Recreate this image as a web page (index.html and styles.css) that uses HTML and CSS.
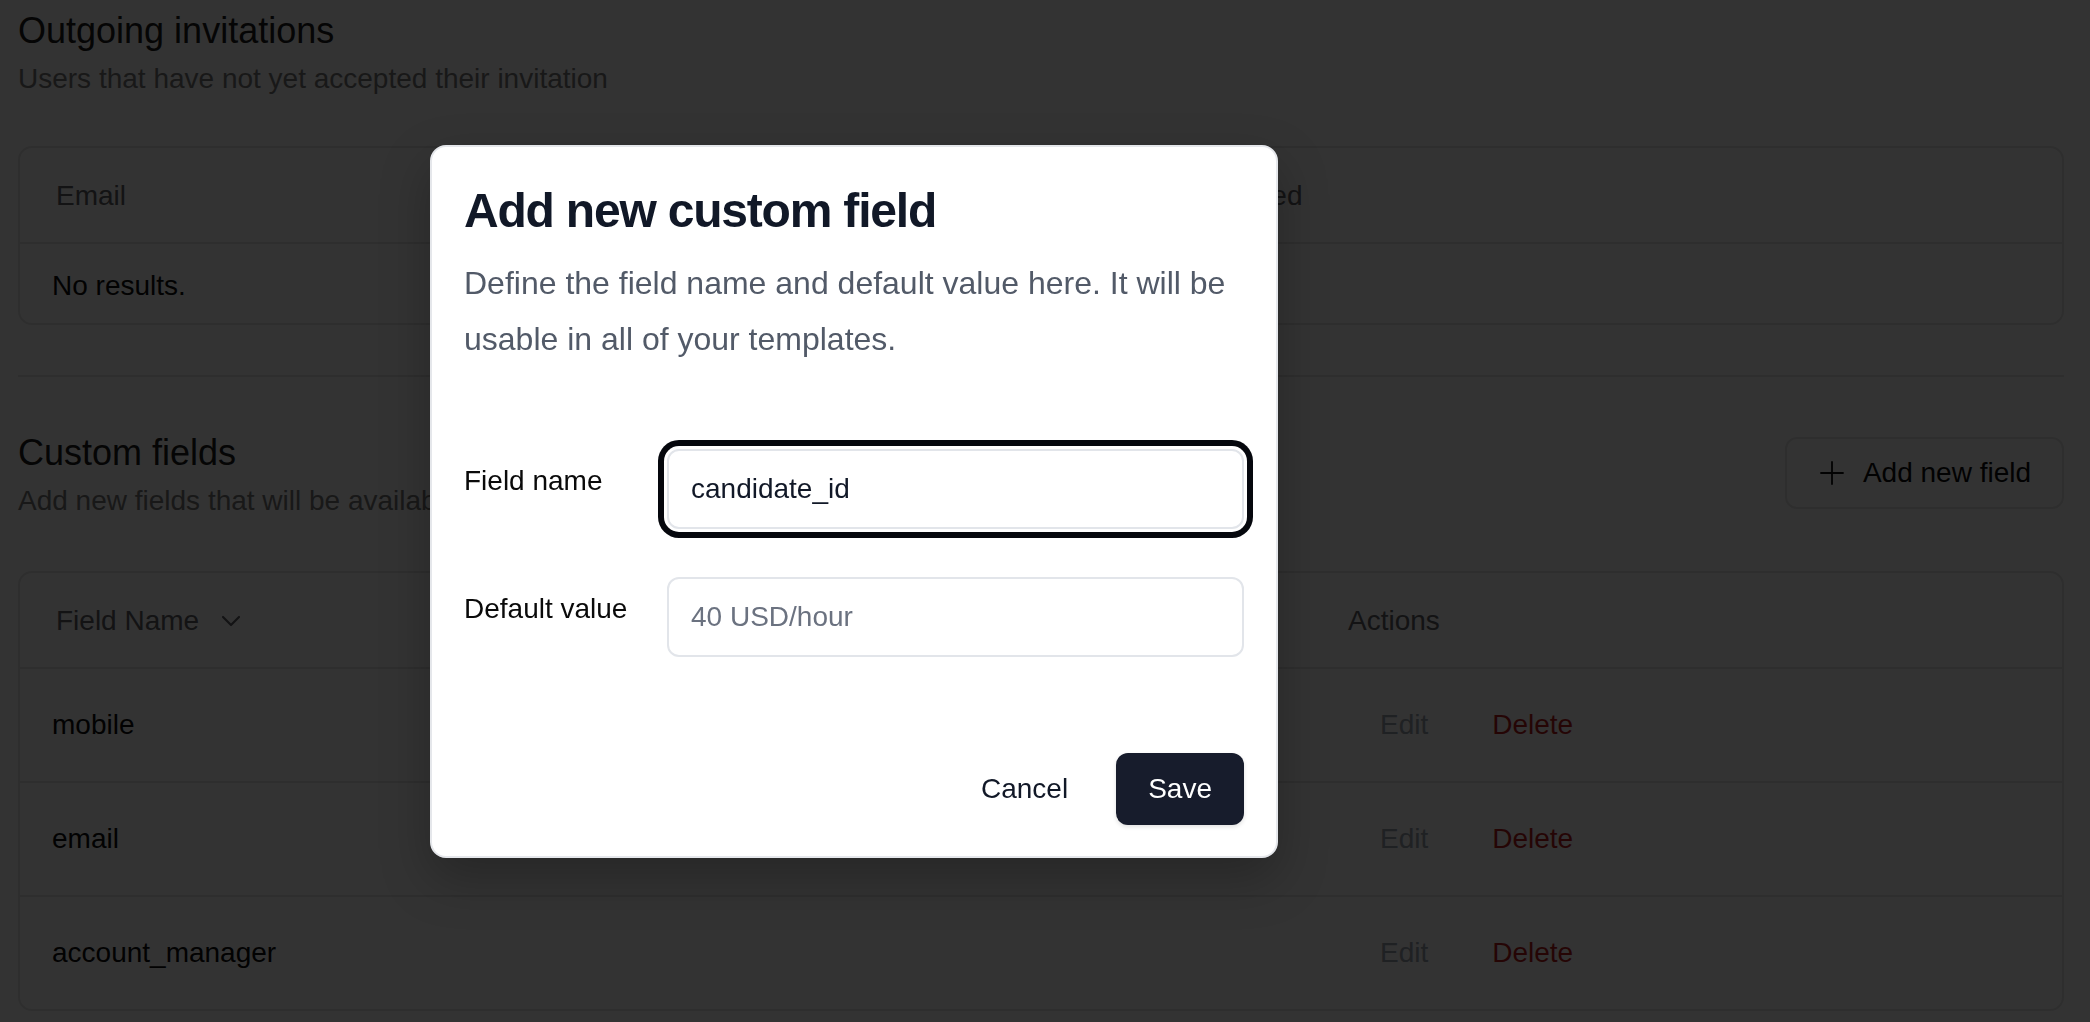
FILE: index.html
```html
<!DOCTYPE html>
<html lang="en">
<head>
    <meta charset="UTF-8">
    <meta name="viewport" content="width=device-width, initial-scale=1.0">
    <title>Settings - Custom fields</title>
    <link rel="stylesheet" href="styles.css">
</head>
<body>

    <main class="settings">
        <!-- 초대 목록 -->
        <section class="section">
            <h2 class="section-title">Outgoing invitations</h2>
            <p class="section-desc">Users that have not yet accepted their invitation</p>

            <table class="data-table">
                <thead>
                    <tr>
                        <th class="col-email">Email</th>
                        <th>Invited</th>
                    </tr>
                </thead>
                <tbody>
                    <tr>
                        <td class="empty-cell" colspan="2">No results.</td>
                    </tr>
                </tbody>
            </table>
        </section>

        <hr class="divider">

        <!-- 커스텀 필드 -->
        <section class="section">
            <div class="section-head">
                <div>
                    <h2 class="section-title">Custom fields</h2>
                    <p class="section-desc">Add new fields that will be available</p>
                </div>
                <button class="btn-outline">
                    <svg class="icon-plus" viewBox="0 0 24 24" fill="none" stroke="currentColor" stroke-width="1.8" stroke-linecap="round">
                        <path d="M12 1v22M1 12h22"/>
                    </svg>
                    Add new field
                </button>
            </div>

            <table class="data-table fields-table">
                <thead>
                    <tr>
                        <th class="col-name">
                            <span class="sort-head">
                                Field Name
                                <svg class="icon-chevron" viewBox="0 0 24 24" fill="none" stroke="currentColor" stroke-width="1.6" stroke-linecap="round" stroke-linejoin="round">
                                    <path d="m6 9 6 6 6-6"/>
                                </svg>
                            </span>
                        </th>
                        <th>Actions</th>
                    </tr>
                </thead>
                <tbody>
                    <tr>
                        <td>mobile</td>
                        <td class="actions-cell">
                            <button class="link-btn edit">Edit</button><button class="link-btn delete">Delete</button>
                        </td>
                    </tr>
                    <tr>
                        <td>email</td>
                        <td class="actions-cell">
                            <button class="link-btn edit">Edit</button><button class="link-btn delete">Delete</button>
                        </td>
                    </tr>
                    <tr>
                        <td>account_manager</td>
                        <td class="actions-cell">
                            <button class="link-btn edit">Edit</button><button class="link-btn delete">Delete</button>
                        </td>
                    </tr>
                </tbody>
            </table>
        </section>
    </main>

    <!-- 모달 -->
    <div class="overlay"></div>

    <div class="dialog" role="dialog">
        <h2 class="dialog-title">Add new custom field</h2>
        <p class="dialog-desc">Define the field name and default value here. It will be usable in all of your templates.</p>

        <div class="dialog-form">
            <div class="form-row">
                <label for="fieldName">Field name</label>
                <input type="text" id="fieldName" class="text-input focused" value="candidate_id">
            </div>
            <div class="form-row">
                <label for="defaultValue">Default value</label>
                <input type="text" id="defaultValue" class="text-input" placeholder="40 USD/hour">
            </div>
        </div>

        <div class="dialog-footer">
            <button class="btn btn-ghost">Cancel</button>
            <button class="btn btn-primary">Save</button>
        </div>
    </div>

</body>
</html>
```

FILE: styles.css
```css
* {
    box-sizing: border-box;
}

body {
    margin: 0;
    font-family: "Liberation Sans", Arial, sans-serif;
    background-color: white;
    color: #0a0a0a;
    overflow: hidden;
}

.settings {
    padding: 3px 26px 0 18px;
}

.section-title {
    margin: 0;
    font-size: 36px;
    line-height: 56px;
    font-weight: normal;
    color: #1a1a1a;
}

.section-desc {
    margin: 0;
    font-size: 28px;
    line-height: 40px;
    color: #7a7a7a;
}

.divider {
    margin: 50px 0 48px;
    border: none;
    border-top: 2px solid #e5e5e5;
}

.section-head {
    display: flex;
    justify-content: space-between;
    align-items: center;
}

/* 테이블 */
.data-table {
    width: 100%;
    margin-top: 47px;
    border: 2px solid #e5e5e5;
    border-radius: 14px;
    border-spacing: 0;
    table-layout: fixed;
    font-size: 28px;
    line-height: 40px;
}

.data-table th {
    padding: 28px 36px 26px;
    text-align: left;
    font-weight: normal;
    color: #5f5f66;
    border-bottom: 2px solid #e5e5e5;
}

.data-table td {
    padding: 36px 32px;
    color: #0a0a0a;
}

.data-table tbody tr:not(:last-child) td {
    border-bottom: 2px solid #e5e5e5;
}

.col-email {
    width: 1164px;
}

.col-name {
    width: 1292px;
}

.empty-cell {
    padding: 22px 32px 17px !important;
}

.fields-table {
    margin-top: 50px;
}

.sort-head {
    display: inline-flex;
    align-items: center;
    gap: 16px;
}

.icon-chevron {
    width: 32px;
    height: 32px;
}

.actions-cell {
    padding: 20px 36px !important;
    white-space: nowrap;
}

.link-btn {
    height: 72px;
    padding: 0 32px;
    border: none;
    background: transparent;
    font-family: inherit;
    font-size: 28px;
    line-height: 72px;
    vertical-align: top;
}

.link-btn.edit {
    color: #9ca3af;
}

.link-btn.delete {
    color: #b91c1c;
}

.btn-outline {
    display: inline-flex;
    align-items: center;
    gap: 19px;
    height: 72px;
    padding: 0 31px 0 33px;
    border: 2px solid #e5e5e5;
    border-radius: 12px;
    background: white;
    font-family: inherit;
    font-size: 28px;
    color: #0a0a0a;
}

.icon-plus {
    width: 24px;
    height: 24px;
}

/* 모달 배경 */
.overlay {
    position: fixed;
    inset: 0;
    background: rgba(0, 0, 0, 0.8);
}

.dialog {
    position: absolute;
    left: 430px;
    top: 145px;
    width: 848px;
    padding: 36px 32px 31px;
    background: white;
    border: 2px solid #e5e7eb;
    border-radius: 16px;
    box-shadow: 0 20px 50px rgba(0, 0, 0, 0.25);
}

.dialog-title {
    margin: 0;
    font-size: 48px;
    line-height: 56px;
    font-weight: bold;
    letter-spacing: -1.2px;
    color: #111827;
}

.dialog-desc {
    margin: 16px 0 0;
    font-size: 32px;
    line-height: 56px;
    color: #525a68;
}

.dialog-form {
    display: grid;
    row-gap: 48px;
    margin-top: 82px;
}

.form-row {
    display: grid;
    grid-template-columns: repeat(4, 1fr);
    column-gap: 32px;
    align-items: center;
}

.form-row label {
    margin-bottom: 16px;
    font-size: 28px;
    line-height: 40px;
    color: #0a0a0a;
}

.text-input {
    grid-column: span 3;
    height: 80px;
    padding: 0 22px;
    border: 2px solid #e2e5ea;
    border-radius: 12px;
    outline: none;
    font-family: inherit;
    font-size: 28px;
    color: #111827;
}

.text-input::placeholder {
    color: #6b7280;
}

/* 포커스 링 */
.text-input.focused {
    box-shadow: 0 0 0 3px white, 0 0 0 9px #05070d;
}

.dialog-footer {
    display: flex;
    justify-content: flex-end;
    gap: 16px;
    margin-top: 96px;
}

.btn {
    height: 72px;
    padding: 0 32px;
    border: none;
    border-radius: 12px;
    font-family: inherit;
    font-size: 28px;
}

.btn-ghost {
    background: transparent;
    color: #111827;
}

.btn-primary {
    background: #171c2c;
    color: white;
    box-shadow: 0 2px 4px rgba(0, 0, 0, 0.12);
}
```
